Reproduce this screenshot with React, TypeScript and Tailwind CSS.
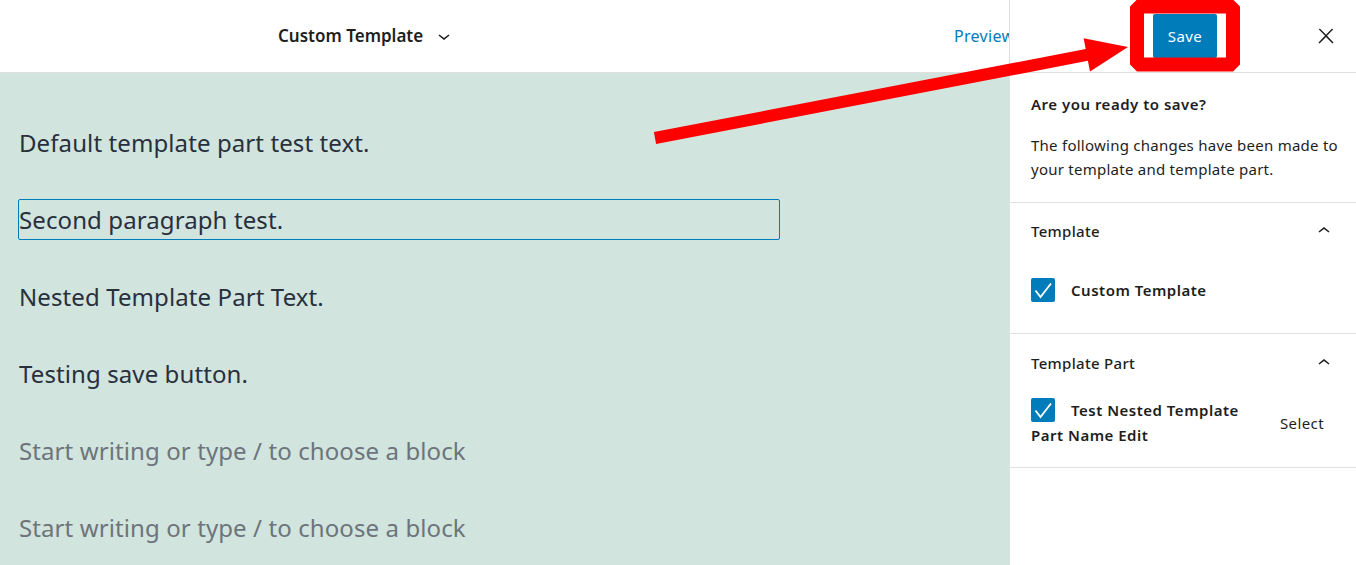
import React from "react";

const font = { fontFamily: '"Noto Sans", "Open Sans", sans-serif' };

const ChevronDown = () => (
  <svg viewBox="0 0 24 24" className="h-6 w-6 fill-[#1e1e1e]">
    <path d="M17.5 11.6L12 16l-5.5-4.4.9-1.2L12 14l4.6-3.6z" />
  </svg>
);

const ChevronUp = () => (
  <svg viewBox="0 0 24 24" className="h-6 w-6 fill-[#1e1e1e]">
    <path d="M6.5 12.4L12 8l5.5 4.4-.9 1.2L12 10l-4.6 3.6-.9-1.2z" />
  </svg>
);

const Check = () => (
  <span className="inline-flex h-6 w-6 shrink-0 items-center justify-center rounded-[2px] bg-[#007cba] align-top">
    <svg viewBox="0 0 24 24" className="h-6 w-6">
      <polyline points="4.5,12.5 9.5,19 20,5.5" fill="none" stroke="#ffffff" strokeWidth="1.8" />
    </svg>
  </span>
);

const paragraphs = [
  { text: "Default template part test text.", selected: false, placeholder: false },
  { text: "Second paragraph test.", selected: true, placeholder: false },
  { text: "Nested Template Part Text.", selected: false, placeholder: false },
  { text: "Testing save button.", selected: false, placeholder: false },
  { text: "Start writing or type / to choose a block", selected: false, placeholder: true },
  { text: "Start writing or type / to choose a block", selected: false, placeholder: true },
];

export default function App() {
  return (
    <div className="relative flex h-[565px] w-[1356px] overflow-hidden bg-white" style={font}>
      {/* editor column */}
      <div className="flex w-[1009px] shrink-0 flex-col">
        <header className="flex h-[73px] shrink-0 items-center overflow-hidden border-b border-[#e0e0e0] bg-white">
          <div className="flex w-[954px] shrink-0 items-center pl-[278px]">
            <span className="text-[17px] font-semibold text-[#1e1e1e]">Custom Template</span>
            <span className="ml-[9px]">
              <ChevronDown />
            </span>
          </div>
          <span className="whitespace-nowrap text-[16px] tracking-[0.3px] text-[#007cba]">Preview</span>
        </header>
        <main className="flex-1 bg-[#d1e4dd] px-[18px] pt-[49px]">
          {paragraphs.map((p, i) => (
            <p
              key={i}
              className={`mb-[36px] w-[762px] rounded-[2px] border text-[24px] leading-[39px] tracking-[0.1px] ${
                p.selected ? "border-[#007cba]" : "border-transparent"
              } ${p.placeholder ? "text-[#6d747b]" : "text-[#28303d]"}`}
            >
              {p.text}
            </p>
          ))}
        </main>
      </div>

      {/* save sidebar */}
      <aside className="flex w-[347px] shrink-0 flex-col border-l border-[#e0e0e0] bg-white text-[#1e1e1e]">
        <div className="flex h-[73px] shrink-0 items-center justify-end gap-[97px] border-b border-[#e0e0e0] pr-[18px]">
          <button className="h-[44px] w-[64px] rounded-[2px] bg-[#007cba] text-[15px] tracking-[0.4px] text-white">
            Save
          </button>
          <svg viewBox="0 0 24 24" className="h-6 w-6 fill-[#1e1e1e]">
            <path d="M13 11.8l6.1-6.3-1-1-6.1 6.2-6.1-6.2-1 1 6.1 6.3-6.5 6.7 1 1 6.5-6.6 6.5 6.6 1-1z" />
          </svg>
        </div>

        <section className="border-b border-[#e0e0e0] pb-[21px] pl-[21px] pr-[14px] pt-[21px]">
          <h2 className="text-[15px] font-semibold leading-[20px] tracking-[0.5px]">Are you ready to save?</h2>
          <p className="mt-[19px] text-[15px] leading-[24px] tracking-[0.25px]">
            The following changes have been made to your template and template part.
          </p>
        </section>

        <section className="border-b border-[#e0e0e0] pb-[19px] pl-[21px] pr-[20px] pt-[18px]">
          <div className="flex h-[20px] items-center justify-between">
            <h3 className="text-[15px] font-medium tracking-[0.3px]">Template</h3>
            <ChevronUp />
          </div>
          <div className="mt-[25px] flex min-h-[48px] items-center">
            <Check />
            <span className="ml-4 text-[15px] font-semibold tracking-[0.5px]">Custom Template</span>
          </div>
        </section>

        <section className="border-b border-[#e0e0e0] pb-[19px] pl-[21px] pr-[20px] pt-[19px]">
          <div className="flex h-[20px] items-center justify-between">
            <h3 className="text-[15px] font-medium tracking-[0.3px]">Template Part</h3>
            <ChevronUp />
          </div>
          <div className="mt-[25px] flex items-center justify-between">
            <div className="text-[15px] font-semibold leading-[25px] tracking-[0.5px]">
              <Check />
              <span className="ml-4">Test Nested Template</span>
              <br />
              Part Name Edit
            </div>
            <button className="px-3 text-[15px] leading-[36px] tracking-[0.4px]">Select</button>
          </div>
        </section>
      </aside>

      {/* annotation */}
      <svg className="pointer-events-none absolute inset-0 h-[565px] w-[1356px]" viewBox="0 0 1356 565">
        <polygon
          fill="#ff0000"
          points="653.9,132.1 1085.7,49 1083.6,38.2 1128,47 1090,71.6 1087.9,60.8 656.1,143.9"
        />
        <rect
          x="1137"
          y="6.5"
          width="96"
          height="58"
          fill="none"
          stroke="#ff0000"
          strokeWidth="14"
          strokeLinejoin="bevel"
        />
      </svg>
    </div>
  );
}
